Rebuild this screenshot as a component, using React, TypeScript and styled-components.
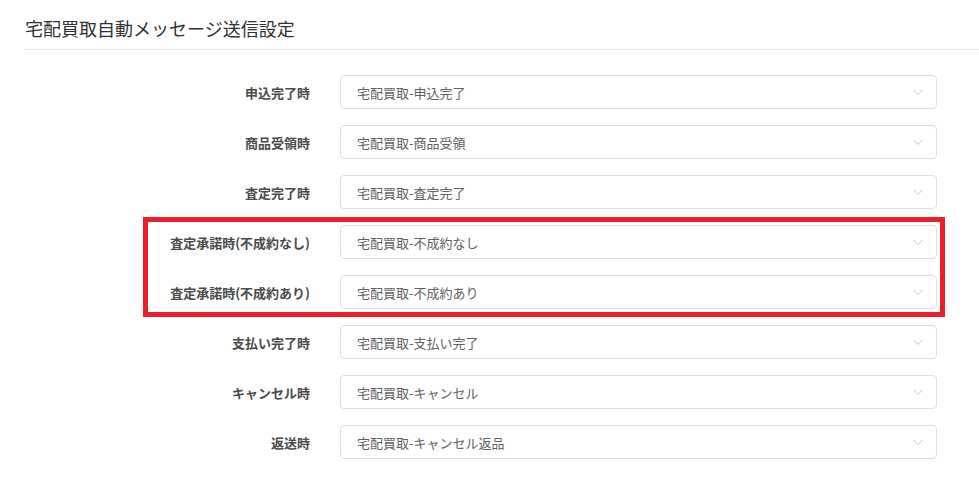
import styled, { createGlobalStyle } from 'styled-components'

const GlobalStyle = createGlobalStyle`
  html, body {
    margin: 0;
    padding: 0;
    background: #ffffff;
  }
  body {
    font-family: "Noto Sans CJK JP", "Noto Sans", "Liberation Sans", sans-serif;
  }
`

const Page = styled.div`
  width: 979px;
  height: 483px;
  overflow: hidden;
  background: #fff;
`

const Header = styled.div`
  margin-left: 25px;
  padding-top: 14px;
  padding-bottom: 7px;
  border-bottom: 1px solid #e4e7ed;
`

const Title = styled.h1`
  margin: 0;
  font-size: 18px;
  font-weight: 400;
  line-height: 28px;
  color: #303133;
`

const Form = styled.div`
  display: flex;
  flex-direction: column;
  gap: 16px;
  padding-top: 25px;
`

const Row = styled.div`
  display: grid;
  grid-template-columns: 310px 597px;
  column-gap: 30px;
  align-items: center;
  height: 34px;
`

const Label = styled.label`
  text-align: right;
  font-size: 13px;
  font-weight: 700;
  color: #4a4a4a;
  white-space: nowrap;
`

const Select = styled.div`
  box-sizing: border-box;
  height: 34px;
  display: flex;
  align-items: center;
  justify-content: space-between;
  padding: 0 12px 0 16px;
  border: 1px solid #dcdfe6;
  border-radius: 4px;
  font-size: 13px;
  color: #606266;
`

const Chevron = styled.svg`
  width: 12px;
  height: 12px;
  color: #c0c4cc;
`

const Highlight = styled.div`
  position: relative;
  display: flex;
  flex-direction: column;
  gap: 16px;

  &::after {
    content: '';
    position: absolute;
    left: 143px;
    top: -8px;
    width: 802px;
    bottom: -8px;
    box-sizing: border-box;
    border: 5px solid #e8202a;
    pointer-events: none;
  }
`

interface Item {
  label: string
  value: string
}

const before: Item[] = [
  { label: '申込完了時', value: '宅配買取-申込完了' },
  { label: '商品受領時', value: '宅配買取-商品受領' },
  { label: '査定完了時', value: '宅配買取-査定完了' }
]

const marked: Item[] = [
  { label: '査定承諾時(不成約なし)', value: '宅配買取-不成約なし' },
  { label: '査定承諾時(不成約あり)', value: '宅配買取-不成約あり' }
]

const after: Item[] = [
  { label: '支払い完了時', value: '宅配買取-支払い完了' },
  { label: 'キャンセル時', value: '宅配買取-キャンセル' },
  { label: '返送時', value: '宅配買取-キャンセル返品' }
]

const FieldRow = ({ label, value }: Item) => (
  <Row>
    <Label>{label}</Label>
    <Select>
      <span>{value}</span>
      <Chevron viewBox="0 0 12 12" fill="none">
        <path d="M1.5 4 L6 8.5 L10.5 4" stroke="currentColor" strokeWidth="1" />
      </Chevron>
    </Select>
  </Row>
)

const App = () => {
  return (
    <Page>
      <GlobalStyle />
      <Header>
        <Title>宅配買取自動メッセージ送信設定</Title>
      </Header>
      <Form>
        {before.map((item) => (
          <FieldRow key={item.label} {...item} />
        ))}
        <Highlight>
          {marked.map((item) => (
            <FieldRow key={item.label} {...item} />
          ))}
        </Highlight>
        {after.map((item) => (
          <FieldRow key={item.label} {...item} />
        ))}
      </Form>
    </Page>
  )
}

export default App
